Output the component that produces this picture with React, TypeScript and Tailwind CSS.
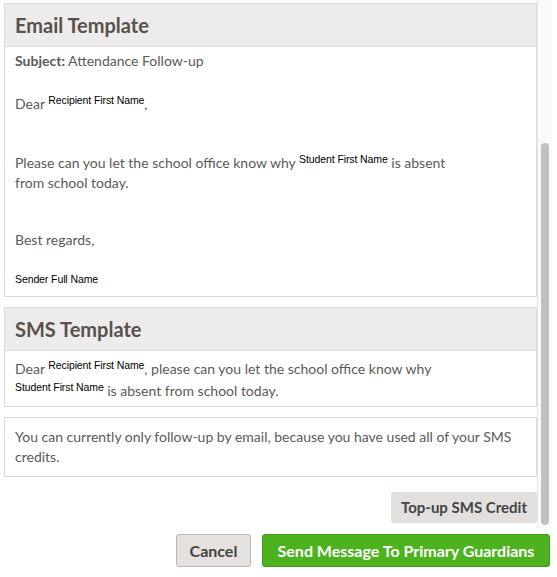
const sans = "font-['Lato','Open_Sans',sans-serif]"

function Tag({ children }: { children: React.ReactNode }) {
  return (
    <span className="relative -top-[5px] font-['Liberation_Sans',Arial,sans-serif] text-[10.5px] leading-none tracking-[-0.1px] text-black">
      {children}
    </span>
  )
}

function Panel({ title, children }: { title?: string; children: React.ReactNode }) {
  return (
    <div className="border border-[#dedcdb] bg-white">
      {title && (
        <div className="flex h-[43px] items-center border-b border-[#dedcdb] bg-[#edecea] px-[10px] text-[20px] font-bold text-[#57524e]">
          {title}
        </div>
      )}
      {children}
    </div>
  )
}

export default function App() {
  return (
    <div className={`h-[577px] w-[557px] bg-white ${sans} text-[14px] text-[#5a5a5a]`}>
      <div className="flex h-[528px] w-[552px]">
        {/* Scrollable content */}
        <div className="flex flex-1 flex-col gap-[10px] pl-[4px] pt-[3px]">
          <Panel title="Email Template">
            <div className="px-[10px] pb-[8px] pt-[4px] leading-[20px]">
              <div>
                <span className="font-bold">Subject:</span> Attendance Follow-up
              </div>
              <div className="mt-[23px]">
                Dear <Tag>Recipient First Name</Tag>,
              </div>
              <div className="mt-[39px]">
                Please can you let the school office know why <Tag>Student First Name</Tag> is absent
                <br />
                from school today.
              </div>
              <div className="mt-[37px]">Best regards,</div>
              <div className="mt-[18px]">
                <span className="font-['Liberation_Sans',Arial,sans-serif] text-[10.5px] leading-none tracking-[-0.1px] text-black">
                  Sender Full Name
                </span>
              </div>
            </div>
          </Panel>

          <Panel title="SMS Template">
            <div className="px-[10px] pb-[4px] pt-[7px] leading-[22px]">
              Dear <Tag>Recipient First Name</Tag>, please can you let the school office know why
              <br />
              <Tag>Student First Name</Tag> is absent from school today.
            </div>
          </Panel>

          <Panel>
            <div className="px-[10px] pb-[9px] pt-[9px] leading-[20px]">
              You can currently only follow-up by email, because you have used all of your SMS credits.
            </div>
          </Panel>

          <div className="mt-[5px] flex justify-end">
            <button className="h-[31px] w-[146px] rounded-[3px] bg-[#e3dfdd] text-[15px] font-bold text-[#444]">
              Top-up SMS Credit
            </button>
          </div>
        </div>

        {/* Scrollbar */}
        <div className="w-[15px] border-l border-[#e6e6e6] bg-[#fafafa] pl-[3px]">
          <div className="mt-[143px] h-[382px] w-[8px] rounded-[4px] bg-[#c1c1c1]" />
        </div>
      </div>

      <div className="mt-[6px] flex w-[550px] justify-end gap-[11px]">
        <button className="h-[33px] w-[75px] rounded-[3px] border border-[#b9b6b4] bg-[#e4e1df] text-[16px] font-bold text-[#444]">
          Cancel
        </button>
        <button className="h-[33px] w-[288px] rounded-[3px] border border-[#3d9a17] bg-[#4cb21e] text-[16px] font-bold text-white">
          Send Message To Primary Guardians
        </button>
      </div>
    </div>
  )
}
